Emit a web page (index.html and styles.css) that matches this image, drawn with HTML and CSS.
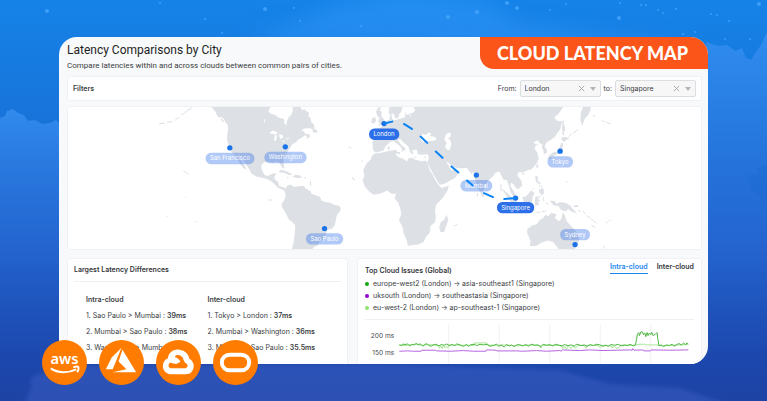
FILE: index.html
```html
<!DOCTYPE html>
<html lang="en">
<head>
  <meta charset="UTF-8" />
  <meta name="viewport" content="width=device-width, initial-scale=1.0" />
  <title>Cloud Latency Map</title>
  <link rel="stylesheet" href="styles.css">
</head>
<body>
  <!-- Sky background -->
  <svg class="sky" viewBox="0 0 767 401" preserveAspectRatio="none" aria-hidden="true">
    <defs>
      <linearGradient id="cloudLeft" x1="0" y1="0" x2="0" y2="1">
        <stop offset="0" stop-color="#3a92f4" stop-opacity=".75" />
        <stop offset="1" stop-color="#2a62cc" stop-opacity="0" />
      </linearGradient>
      <filter id="soft" x="-20%" y="-50%" width="140%" height="200%"><feGaussianBlur stdDeviation="9" /></filter>
      <filter id="haze" x="-10%" y="-20%" width="120%" height="140%"><feGaussianBlur stdDeviation="2" /></filter>
    </defs>
    <path fill="#3398fb" opacity=".5" filter="url(#soft)" d="M240 40 L290 24 L335 6 L400 -10 L480 0 L520 22 L600 34 L710 44 L500 50 Z" />
    <path fill="url(#cloudLeft)" d="M0 118 L5 116 L7 111 L13 109 L18 113 L24 115 L28 121 L35 120 L42 124 L50 123 L56 120 L60 124 V300 H0 Z" />
    <path fill="url(#cloudLeft)" d="M706 42 L718 46 L727 45 L735 51 L742 48 L746 58 L751 60 L756 52 L761 45 L767 32 V320 H706 Z" />
    <path fill="#1667cf" opacity=".3" d="M767 164 L758 168 L757 173 L749 175 L747 181 L753 185 L750 190 L759 196 L767 200 Z" />
    <path fill="#4a6bd0" opacity=".35" filter="url(#haze)" d="M24 405 L29 392 L32 387 L30 380 L36 374 L46 373 L60 366 L380 364 L560 370 L610 384 L680 388 L730 405 Z" />
    <g fill="#4aa8ff" opacity=".75">
      <circle cx="47" cy="11" r="2" /><circle cx="160" cy="3" r="1" /><circle cx="205" cy="19" r="1" />
      <circle cx="265" cy="9" r="2" /><circle cx="294" cy="8" r="1" /><circle cx="300" cy="21" r="1" />
      <circle cx="222" cy="33" r="1" /><circle cx="361" cy="26" r="1" /><circle cx="448" cy="17" r="2" />
      <circle cx="477" cy="12" r="2" /><circle cx="507" cy="3" r="2" /><circle cx="517" cy="8" r="2" />
      <circle cx="550" cy="10" r="1" /><circle cx="566" cy="4" r="1" /><circle cx="619" cy="18" r="2" />
      <circle cx="620" cy="3" r="1" /><circle cx="641" cy="5" r="1" /><circle cx="646" cy="5" r="1" />
      <circle cx="658" cy="10" r="1" /><circle cx="663" cy="13" r="1" /><circle cx="676" cy="9" r="1" />
      <circle cx="711" cy="14" r="1" /><circle cx="717" cy="15" r="1" /><circle cx="759" cy="4" r="2" />
      <circle cx="729" cy="21" r="1" /><circle cx="695" cy="32" r="1" /><circle cx="683" cy="34" r="1" />
      <circle cx="725" cy="39" r="1" /><circle cx="750" cy="39" r="1" />
    </g>
  </svg>

  <main class="card">
    <header class="header">
      <div class="title">
        <h1>Latency Comparisons by City</h1>
        <p>Compare latencies within and across clouds between common pairs of cities.</p>
      </div>
      <div class="banner">CLOUD LATENCY MAP</div>
    </header>

    <form class="panel filters">
      <strong>Filters</strong>
      <label for="from">From:</label>
      <div class="picker">
        <select id="from"><option>London</option></select>
        <button type="button" aria-label="Clear from"><svg viewBox="0 0 8 8"><path d="M1 1 L7 7 M7 1 L1 7" /></svg></button>
        <span class="caret"></span>
      </div>
      <label for="to">to:</label>
      <div class="picker">
        <select id="to"><option>Singapore</option></select>
        <button type="button" aria-label="Clear to"><svg viewBox="0 0 8 8"><path d="M1 1 L7 7 M7 1 L1 7" /></svg></button>
        <span class="caret"></span>
      </div>
    </form>

    <div class="panel map">
      <svg viewBox="0 2 1905 426">
        <!-- Americas -->
        <g transform="translate(249 -18)">
          <g class="land">
            <path d="M180 18 L186 24 L195 35 L199 45 L206 52 L213 50 L221 57 L226 68 L232 74 L233 88 L230 104 L230 122 L236 137 L239 148 L247 160 L256 168 L262 178 L268 190 L278 203 L288 209 L283 197 L274 184 L268 172 L275 175 L287 194 L298 210 L303 220 L318 229 L334 233 L350 237 L361 243 L372 252 L384 264 L396 268 L401 273 L406 264 L396 261 L386 258 L384 246 L374 238 L372 231 L378 219 L368 220 L360 224 L350 228 L341 223 L334 208 L333 194 L342 186 L356 184 L368 188 L374 183 L386 186 L392 196 L398 206 L402 202 L399 187 L400 176 L408 167 L412 154 L418 144 L426 132 L438 126 L442 119 L453 113 L464 105 L470 108 L469 117 L480 108 L477 102 L466 101 L460 92 L452 92 L462 85 L478 84 L487 86 L488 97 L502 97 L500 89 L493 87 L491 72 L483 66 L481 52 L475 48 L476 36 L469 33 L464 27 L455 29 L449 18 L426 18 L428 30 L423 43 L414 52 L410 64 L408 76 L402 69 L401 56 L386 52 L374 43 L360 40 L354 32 L362 18 Z" />
            <path d="M402 272 L411 257 L420 253 L432 261 L448 258 L461 258 L467 266 L480 273 L484 281 L497 286 L509 290 L514 302 L527 306 L540 308 L554 315 L567 317 L572 325 L569 335 L560 345 L557 360 L554 375 L546 386 L532 390 L527 402 L520 414 L513 423 L505 429 L504 437 L495 439 L486 447 L425 447 L430 428 L433 404 L435 376 L426 366 L416 359 L407 341 L395 321 L394 311 L402 300 L406 286 Z" />
            <path d="M384 217 L392 209 L405 212 L419 219 L426 225 L416 225 L402 218 Z M427 230 L435 224 L449 226 L456 232 L440 234 Z M409 231 L417 232 L412 235 Z M461 231 L469 233 L462 235 Z M213 53 L221 64 L219 67 L211 58 Z M109 217 L115 220 L111 224 Z M470 74 L480 80 L468 78 Z" />
            <path class="isles" d="M126 19 L116 30 M117 25 L102 38 L92 44 M86 50 L73 60 M66 64 L49 66 M42 69 L25 70 M98 212 L108 218 M354 300 H366 M48 350 H51 M104 291 H107 M134 366 H138 M596 139 L604 144 M607 234 L613 240 M481 244 V257" />
          </g>
          <path class="water" d="M357 99 L366 91 L377 94 L382 101 L372 102 Z M373 105 L380 105 L377 122 L371 120 Z M386 101 L397 104 L399 112 L389 116 Z M390 125 L405 120 L403 124 Z M404 116 L418 112 L413 117 Z M341 54 L345 61 L342 69 Z" />
        </g>
        <!-- Africa, Europe and Asia -->
        <g transform="translate(849 -18)">
          <g class="land">
            <path d="M190 18 L196 30 L188 38 L173 40 L167 34 L163 40 L167 50 L158 53 L145 57 L134 60 L127 57 L121 48 L118 58 L111 62 L104 73 L96 78 L88 84 L79 85 L79 91 L89 96 L90 110 L85 119 L70 118 L67 127 L69 150 L77 157 L90 154 L101 150 L106 139 L116 130 L119 125 L131 122 L140 130 L151 139 L156 147 L154 155 L163 151 L168 145 L155 135 L145 122 L143 115 L153 118 L164 130 L175 138 L180 153 L186 163 L191 159 L187 151 L193 149 L202 149 L203 162 L216 164 L234 162 L237 173 L232 187 L246 214 L259 237 L270 254 L283 252 L299 243 L316 233 L328 217 L319 209 L312 210 L305 210 L298 200 L289 184 L296 187 L305 197 L316 202 L332 204 L351 203 L359 214 L365 222 L370 216 L377 241 L388 272 L396 282 L403 269 L404 257 L418 240 L431 228 L438 217 L449 214 L456 228 L462 240 L471 239 L478 257 L482 274 L492 290 L501 298 L497 281 L489 268 L482 257 L484 248 L491 252 L501 266 L507 267 L518 256 L515 241 L503 225 L507 216 L519 217 L532 211 L546 207 L561 191 L568 176 L563 157 L555 145 L558 137 L568 132 L558 133 L552 126 L565 120 L570 128 L579 132 L577 142 L582 151 L583 162 L592 158 L592 148 L585 140 L591 127 L603 119 L615 111 L625 97 L633 86 L636 70 L640 62 L625 63 L614 52 L629 38 L635 30 L642 18 Z" />
            <path d="M76 160 L98 157 L119 152 L139 149 L142 156 L138 164 L146 171 L157 174 L171 184 L176 174 L188 173 L196 179 L216 183 L228 181 L233 190 L240 211 L249 225 L257 241 L269 258 L276 264 L297 256 L294 270 L279 294 L260 313 L255 331 L258 350 L256 366 L242 378 L240 398 L228 411 L221 426 L205 434 L184 436 L174 438 L170 421 L161 400 L158 383 L147 360 L154 343 L151 325 L145 308 L134 296 L138 281 L124 281 L112 271 L92 280 L70 284 L58 275 L44 259 L38 241 L43 226 L39 210 L50 189 L62 178 L68 164 Z" />
            <path d="M290 344 L296 359 L289 378 L283 396 L272 396 L268 382 L273 366 L283 359 Z M396 275 L404 286 L400 291 L395 286 Z" />
            <path d="M84 22 L94 21 L89 30 L95 36 L94 47 L101 55 L105 65 L98 73 L82 78 L90 69 L84 63 L89 54 L82 47 L78 35 Z M66 54 L76 50 L78 61 L74 68 L64 69 Z" />
            <path d="M119 18 L116 38 L121 44 L130 39 L137 55 L146 51 L148 41 L154 34 L158 18 Z M121 44 L127 46 L125 56 L119 54 Z" />
            <path d="M136 157 L151 155 L149 162 Z M113 139 L119 139 L118 151 L114 149 Z M190 170 H202 L196 173 Z M221 171 L229 168 L226 174 Z" />
            <path class="isles" d="M6 232 L14 239 M34 182 L39 184 M313 378 L323 374 M383 278 V290 M454 252 V275" />
          </g>
          <path class="water" d="M213 119 L211 109 L219 101 L229 104 L236 97 L244 100 L240 107 L256 110 L260 119 L242 123 L228 120 L220 125 Z M288 103 L297 97 L304 101 L301 111 L295 114 L303 122 L304 136 L299 150 L290 147 L286 137 L291 129 L284 118 Z M162 38 L190 31 L190 34 L170 43 Z M178 39 L184 47 L179 47 Z" />
        </g>
        <!-- Pacific islands and Oceania -->
        <g transform="translate(1299 -18)">
          <g class="land">
            <path d="M83 387 L99 376 L112 373 L121 359 L131 354 L138 345 L147 348 L155 338 L171 343 L166 354 L179 364 L186 356 L190 336 L197 348 L202 364 L213 377 L225 389 L236 402 L239 420 L233 436 L226 447 L177 447 L169 436 L161 426 L145 422 L127 428 L109 438 L91 439 L93 423 L83 399 Z" />
            <path d="M6 266 L15 271 L33 289 L51 304 L57 317 L53 326 L40 314 L26 295 Z M58 327 L72 328 L90 332 L105 337 L86 336 Z M68 291 L79 289 L95 271 L105 279 L99 291 L97 306 L85 314 L74 310 Z M107 291 L126 288 L113 296 L123 301 L116 306 L120 316 L112 314 L109 321 L106 309 Z" />
            <path d="M107 227 L115 229 L115 243 L125 250 L119 252 L109 244 Z M123 258 L130 256 L127 262 Z M118 269 L131 263 L134 278 L127 286 L119 276 Z M105 262 L98 272 L100 265 Z M112 191 L117 195 L114 206 L110 200 Z M67 219 L76 219 L70 225 Z" />
            <path d="M151 302 L166 303 L170 311 L184 306 L201 310 L213 317 L219 326 L232 338 L220 337 L206 327 L201 334 L185 331 L178 319 L162 316 Z M222 318 L237 314 L236 320 L225 322 Z" />
            <path d="M149 165 L162 156 L174 154 L181 142 L185 128 L191 129 L190 143 L187 156 L176 161 L164 166 L158 170 L154 176 L144 178 Z M188 110 L201 111 L211 115 L200 119 L195 125 L186 119 Z M191 54 L194 73 L198 91 L193 93 L194 105 L189 104 L188 77 Z" />
            <path d="M251 19 L273 18 L274 29 L265 46 L257 54 L249 76 L243 61 L244 38 Z" />
            <path class="isles" d="M207 110 L217 100 M221 99 L236 88 M280 44 L287 49 M307 62 L316 64 M321 66 L335 71 M110 336 L121 338 M126 335 L140 333 M132 292 L133 304 M139 310 L148 312 M236 330 L244 335 M250 332 L258 342 M261 347 L272 353 M275 356 L281 363 M283 362 L291 371 M276 376 L288 383 M321 369 L327 365 M329 362 L334 360 M310 437 L318 446 M201 246 H205 M120 254 V260" />
          </g>
        </g>

        <g class="pin" transform="translate(249 -18)">
          <rect x="165" y="158" width="147" height="34" rx="16" /><text x="238" y="181">San Francisco</text><circle cx="238" cy="143" r="8" />
          <rect x="342" y="155" width="127" height="34" rx="16" /><text x="405" y="178">Washington</text><circle cx="405" cy="140" r="8" />
          <rect x="467" y="400" width="112" height="34" rx="16" /><text x="523" y="423">Sao Paulo</text><circle cx="523" cy="386" r="8" />
        </g>
        <g class="pin" transform="translate(1299 -18)">
          <rect x="-118" y="240" width="96" height="34" rx="16" /><text x="-70" y="263">Mumbai</text><circle cx="-70" cy="225" r="8" />
          <rect x="144" y="168" width="77" height="34" rx="16" /><text x="182" y="191">Tokyo</text><circle cx="182" cy="153" r="8" />
          <rect x="182" y="387" width="90" height="34" rx="16" /><text x="227" y="410">Sydney</text><circle cx="227" cy="434" r="8" />
        </g>
        <g class="pin selected" transform="translate(849 -18)">
          <rect x="57" y="85" width="91" height="34" rx="16" /><text x="102" y="108">London</text><circle cx="102" cy="70" r="8" />
          <rect x="442" y="306" width="112" height="34" rx="16" /><text x="498" y="329">Singapore</text><circle cx="498" cy="294" r="8" />
          <path class="route" d="M105 69 L127 64 M162 71 L186 86 M212 109 L232 128 M258 154 L278 173 M305 199 L326 217 M352 241 L369 256 M403 279 L430 291 M464 297 L498 294" />
        </g>
      </svg>
    </div>

    <div class="columns">
      <section class="panel differences">
        <h2>Largest Latency Differences</h2>
        <div class="lists">
          <div>
            <h3>Intra-cloud</h3>
            <p>1. Sao Paulo &gt; Mumbai : <b>39ms</b></p>
            <p>2. Mumbai &gt; Sao Paulo : <b>38ms</b></p>
            <p>3. Washington &gt; Mumbai : <b>37ms</b></p>
          </div>
          <div>
            <h3>Inter-cloud</h3>
            <p>1. Tokyo &gt; London : <b>37ms</b></p>
            <p>2. Mumbai &gt; Washington : <b>36ms</b></p>
            <p>3. Mumbai &gt; Sao Paulo : <b>35.5ms</b></p>
          </div>
        </div>
      </section>

      <section class="panel issues">
        <div class="issues-head">
          <h2>Top Cloud Issues (Global)</h2>
          <nav class="tabs">
            <button type="button" class="active">Intra-cloud</button>
            <button type="button">Inter-cloud</button>
          </nav>
        </div>
        <ul>
          <li class="green">europe-west2 (London) → asia-southeast1 (Singapore)</li>
          <li class="purple">uksouth (London) → southeastasia (Singapore)</li>
          <li class="lime">eu-west-2 (London) → ap-southeast-1 (Singapore)</li>
        </ul>
        <svg class="chart" viewBox="44 211 990 156">
          <path class="grid" d="M296 225 V367 M448 225 V367 M600 225 V367 M752 225 V367 M904 225 V367" />
          <text x="132" y="266">200 ms</text>
          <text x="132" y="315">150 ms</text>
          <path class="line lime" d="M147 286 L165 288 L190 284 L215 287 L240 285 L265 288 L268 296 L272 289 L276 297 L280 288 L284 295 L288 290 L293 296 L296 286 L340 287 L372 288 L374 280 L409 280 L411 287 L460 286 L500 289 L540 286 L570 288 L573 296 L577 288 L610 287 L635 288 L639 297 L644 289 L650 299 L656 288 L664 297 L670 288 L677 296 L685 287 L706 288 L709 296 L714 287 L745 288 L752 294 L758 287 L784 288 L788 296 L792 289 L799 296 L808 295 L812 287 L850 287 L861 286 L866 284 L885 284 L889 286 L918 286 L940 288 L970 287 L1017 285" />
          <path class="line purple" d="M147 305 L172 304 L190 305 L213 305 L215 302 L256 302 L260 304 L300 305 L340 303 L370 305 L408 305 L410 301 L438 302 L441 304 L500 304 L520 305 L560 303 L590 305 L630 303 L634 305 L638 301 L690 303 L720 301 L760 303 L800 302 L840 301 L848 302 L850 297 L853 302 L881 301 L883 304 L903 304 L905 301 L960 302 L1017 301" />
          <path class="line green" d="M147 286 L154 288 L158 283 L164 285 L172 283 L178 289 L185 285 L192 286 L198 281 L203 285 L211 283 L218 290 L224 285 L230 282 L236 288 L243 290 L249 286 L257 284 L266 289 L273 285 L282 287 L290 283 L297 288 L306 285 L314 288 L320 283 L330 286 L337 290 L344 288 L350 284 L356 291 L362 285 L372 284 L380 288 L390 284 L400 286 L412 284 L420 290 L430 288 L440 284 L446 290 L454 287 L463 292 L470 285 L479 289 L485 286 L493 291 L500 286 L509 285 L518 289 L528 285 L536 290 L545 284 L554 287 L564 286 L573 291 L580 284 L590 287 L600 285 L608 289 L618 284 L628 287 L637 289 L644 285 L655 288 L665 286 L673 290 L681 284 L694 288 L704 286 L713 290 L722 285 L732 288 L740 284 L751 286 L760 290 L770 287 L776 291 L784 285 L796 287 L806 284 L815 289 L824 286 L834 288 L842 284 L851 289 L858 286 L861 270 L864 253 L868 249 L870 258 L874 247 L879 247 L882 255 L886 250 L889 261 L893 249 L896 258 L900 250 L904 255 L907 248 L911 258 L918 254 L923 249 L925 267 L929 289 L935 286 L943 291 L951 286 L960 288 L968 284 L974 290 L982 285 L989 282 L996 286 L1003 281 L1009 285 L1013 280 L1017 283" />
        </svg>
      </section>
    </div>
  </main>

  <div class="clouds">
    <svg viewBox="0 0 46 46" role="img" aria-label="AWS">
      <circle cx="23" cy="23" r="23" />
      <text x="23" y="25">aws</text>
      <path class="smile" d="M9 29 C16 34 27 34 35 30" />
      <path class="smile" d="M32 28 C37 26 39 27 36 33" />
    </svg>
    <svg viewBox="0 0 46 46" role="img" aria-label="Azure">
      <circle cx="23" cy="23" r="23" />
      <path class="mark" d="M23 8 L13 18 L7 30 H14 Z M24 10 L38 33 H14 L28 30 L20 22 Z" />
    </svg>
    <svg viewBox="0 0 46 46" role="img" aria-label="Google Cloud">
      <circle cx="23" cy="23" r="23" />
      <path class="mark" fill-rule="evenodd" d="M12 19 C13 12 19 9 24 10 C30 11 33 14 34 19 C40 23 40 30 35 34 C33 35 31 35 29 35 H16 C11 35 7 31 7 27 C7 23 9 20 12 19 Z M15 23 C12 24 12 29 16 29 H29 C33 29 33 25 31 24 C29 23 29 22 28 20 C27 15 21 14 19 17 C22 18 24 20 25 22 C21 26 18 24 15 23 Z" />
    </svg>
    <svg viewBox="0 0 46 46" role="img" aria-label="Oracle Cloud">
      <circle cx="23" cy="23" r="23" />
      <rect class="ring" x="9" y="15" width="28" height="16" rx="8" />
    </svg>
  </div>
</body>
</html>
```
FILE: styles.css
```css
* {
  box-sizing: border-box;
}

body {
  margin: 0;
  height: 100vh;
  padding: 37px 59px;
  display: flex;
  position: relative;
  overflow: hidden;
  font-family: 'Inter', 'Liberation Sans', sans-serif;
  font-size: 7px;
  color: #3a3d42;
  background: linear-gradient(#1583e8 0%, #1873d9 30%, #2263cf 60%, #1c47ac 90%, #1e43a5 100%);
}

.sky {
  position: absolute;
  left: 0;
  top: 0;
  width: 100%;
  height: 100%;
}

.card {
  flex: 1;
  position: relative;
  overflow: hidden;
  border-radius: 18px;
  background-color: #f8f9fb;
  padding: 0 6px 0 8px;
}

.header {
  display: flex;
  justify-content: space-between;
  align-items: flex-start;
  height: 39px;
  margin-right: -6px;
}

.title {
  font-family: 'Roboto', sans-serif;
}

h1 {
  margin: 6px 0 3px;
  font-size: 12px;
  line-height: 15px;
  font-weight: 400;
  color: #1d1f23;
}

.title p {
  margin: 0;
  font-size: 8px;
  line-height: 10px;
}

.banner {
  padding: 0 20px 0 17px;
  line-height: 32px;
  border-bottom-left-radius: 14px;
  background-color: #fc5519;
  color: white;
  font-family: 'Lato', sans-serif;
  font-size: 18px;
  font-weight: 900;
}

.panel {
  background-color: white;
  border: 1px solid #eff1f4;
  border-radius: 3px;
}

.filters {
  display: flex;
  align-items: center;
  gap: 3px;
  height: 25px;
  padding: 0 5px;
}

.filters strong {
  margin-right: auto;
  font-weight: 600;
}

.picker {
  display: flex;
  align-items: center;
  width: 81px;
  height: 17px;
  padding: 0 4px;
  gap: 5px;
  border: 1px solid #dcdee1;
  border-radius: 2px;
  background-color: #f7f7f8;
}

.picker select {
  flex: 1;
  min-width: 0;
  padding: 0;
  border: none;
  appearance: none;
  background: none;
  color: inherit;
  font: inherit;
}

.picker button {
  width: 7px;
  height: 7px;
  padding: 0;
  border: none;
  background: none;
  display: flex;
}

.picker button svg {
  width: 7px;
  stroke: #a0a2a6;
}

.caret {
  border: 3px solid transparent;
  border-top: 4px solid #b3b5b9;
  border-bottom: none;
}

.map {
  margin: 5px 0 8px;
}

.map svg,
.chart {
  display: block;
  width: 100%;
}

.land {
  fill: #dde0e5;
}

.isles {
  fill: none;
  stroke: #dde0e5;
  stroke-width: 3;
}

.water {
  fill: white;
}

.pin rect {
  fill: #3b78eb;
  opacity: 0.4;
}

.pin circle {
  fill: #1a73e8;
}

.pin text {
  fill: white;
  font-size: 18px;
  text-anchor: middle;
}

.selected rect {
  fill: #2c6fe8;
  opacity: 1;
}

.route {
  fill: none;
  stroke: #0a84f5;
  stroke-width: 6;
  stroke-linecap: round;
}

.columns {
  display: grid;
  grid-template-columns: 281fr 345fr;
  gap: 9px;
}

h2 {
  margin: 0;
  font-size: 7px;
  line-height: 10px;
  font-weight: 600;
  color: #35373b;
}

.differences {
  padding: 6px;
}

.differences h2 {
  padding-bottom: 6px;
  border-bottom: 1px solid #eef0f2;
}

.lists {
  display: grid;
  grid-template-columns: 1fr 1fr;
  padding: 10px 12px;
}

.lists div {
  white-space: nowrap;
}

h3,
.lists p {
  margin: 0;
  font-size: 7px;
  line-height: 16px;
}

h3 {
  font-weight: 600;
}

.lists b {
  font-weight: 600;
}

.issues {
  padding: 2px 7px;
}

.issues-head {
  display: flex;
  justify-content: space-between;
}

.issues h2 {
  padding-top: 5px;
}

.tabs {
  display: flex;
  gap: 9px;
  align-items: flex-start;
}

.tabs button {
  padding: 0 0 1px;
  border: none;
  border-bottom: 1px solid transparent;
  background: none;
  font: inherit;
  font-weight: 600;
  line-height: 11px;
  color: #35373b;
}

.tabs .active {
  color: #1a85f0;
  border-color: #1a85f0;
}

.issues ul {
  margin: 2px 0 0;
  padding: 0 0 5px;
  list-style: none;
  border-bottom: 1px solid #eef0f2;
}

.issues li {
  display: flex;
  align-items: center;
  gap: 4px;
  line-height: 12px;
}

.issues li::before {
  content: "";
  width: 4px;
  height: 4px;
  border-radius: 50%;
  background-color: #12a812;
}

.issues li.purple::before {
  background-color: #9400d3;
}

.issues li.lime::before {
  background-color: #8fe36f;
}

.chart text {
  font-size: 20px;
  text-anchor: end;
  fill: #4a4d52;
}

.grid {
  stroke: #f1f2f4;
  stroke-width: 3;
}

.line {
  fill: none;
  stroke-width: 3;
}

.line.green {
  stroke: #4cb840;
}

.line.purple {
  stroke: #b565e0;
}

.line.lime {
  stroke: #a8e596;
}

.clouds {
  position: absolute;
  left: 42px;
  bottom: 16px;
  display: flex;
  gap: 12px;
}

.clouds svg {
  width: 45px;
  height: 45px;
}

.clouds circle {
  fill: #ff7c00;
}

.clouds text {
  fill: white;
  font-family: 'Noto Sans', sans-serif;
  font-size: 15px;
  font-weight: 600;
  text-anchor: middle;
}

.mark {
  fill: white;
}

.smile,
.ring {
  fill: none;
  stroke: white;
  stroke-width: 2;
}

.ring {
  stroke-width: 4;
}
```
